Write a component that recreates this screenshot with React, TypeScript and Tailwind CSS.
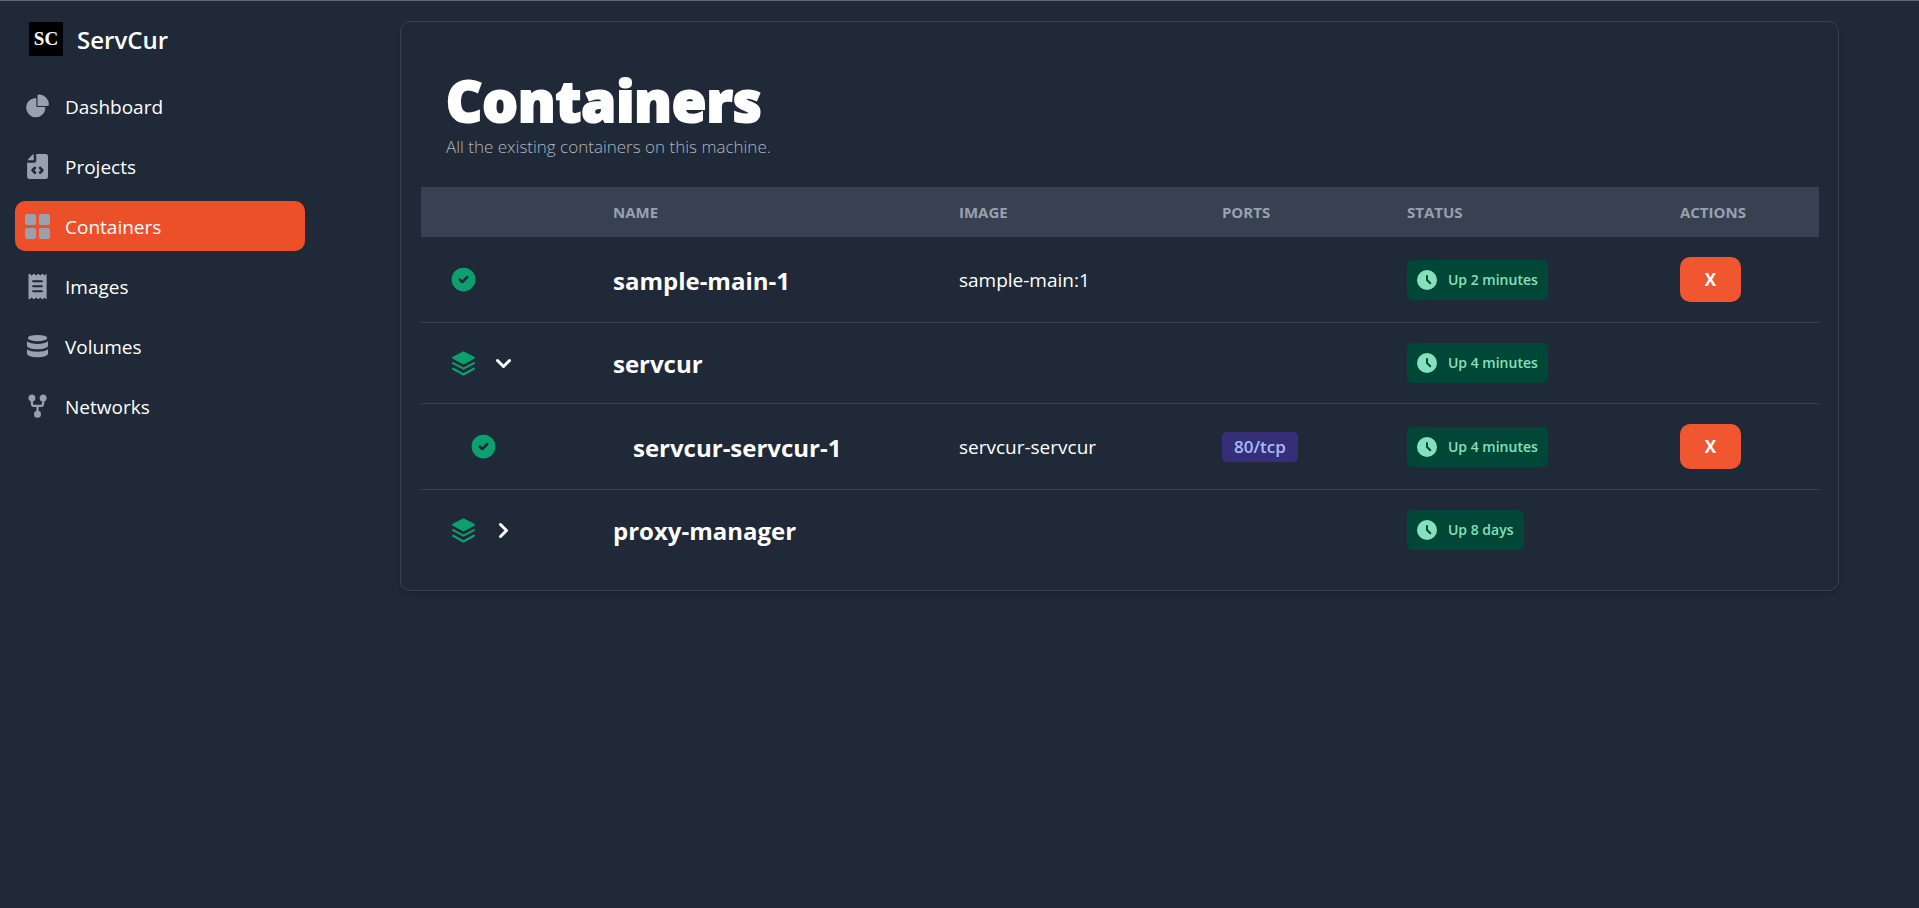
import { ReactNode } from 'react';

type IconProps = { className?: string };

const PieIcon = ({ className }: IconProps) => (
  <svg className={className} viewBox="0 0 22 21" fill="currentColor" aria-hidden="true">
    <path d="M16.975 11H10V4.025a1 1 0 0 0-1.066-.998 8.5 8.5 0 1 0 9.039 9.039.999.999 0 0 0-1-1.066h.002Z" />
    <path d="M12.5 0c-.157 0-.311.01-.565.027A1 1 0 0 0 11 1.02V10h8.975a1 1 0 0 0 1-.935c.013-.188.028-.374.028-.565A8.51 8.51 0 0 0 12.5 0Z" />
  </svg>
);

const FileCodeIcon = ({ className }: IconProps) => (
  <svg className={className} viewBox="0 0 20 20" fill="currentColor" aria-hidden="true">
    <path d="M7 .13a2.96 2.96 0 0 0-1.293.749L2.879 3.707A2.96 2.96 0 0 0 2.13 5H7V.13Z" />
    <path
      fillRule="evenodd"
      d="M16.6 0H9v5a2 2 0 0 1-2 2H1.7v11.2A1.8 1.8 0 0 0 3.5 20h13.1a1.8 1.8 0 0 0 1.8-1.8V1.8A1.8 1.8 0 0 0 16.6 0ZM8.707 14.293a1 1 0 1 1-1.414 1.414l-2-2a1 1 0 0 1 0-1.414l2-2a1 1 0 0 1 1.414 1.414L7.414 13l1.293 1.293Zm6-.586-2 2a1 1 0 0 1-1.414-1.414L12.586 13l-1.293-1.293a1 1 0 0 1 1.414-1.414l2 2a1 1 0 0 1 0 1.414Z"
    />
  </svg>
);

const GridIcon = ({ className }: IconProps) => (
  <svg className={className} viewBox="0 0 18 18" fill="currentColor" aria-hidden="true">
    <rect width="8" height="8" rx="1.6" />
    <rect x="10" width="8" height="8" rx="1.6" />
    <rect y="10" width="8" height="8" rx="1.6" />
    <rect x="10" y="10" width="8" height="8" rx="1.6" />
  </svg>
);

const ReceiptIcon = ({ className }: IconProps) => (
  <svg className={className} viewBox="0 0 20 20" fill="currentColor" aria-hidden="true">
    <path
      fillRule="evenodd"
      d="M2.8 0h1.2l1.3 1.2L6.7 0h1l1.3 1.2L10.3 0h.6l1.3 1.2L13.5 0h1l1.2 1.2L16.7 0H17.3v20h-.6l-1-1.2L14.5 20h-1l-1.3-1.2L10.9 20h-.6L9 18.8 7.7 20h-1l-1.4-1.2L4 20H2.8V0ZM6.5 5a.8.8 0 0 0 0 1.6h7a.8.8 0 0 0 0-1.6h-7Zm0 4a.8.8 0 0 0 0 1.6h7a.8.8 0 0 0 0-1.6h-7Zm0 4a.8.8 0 0 0 0 1.6h7a.8.8 0 0 0 0-1.6h-7Z"
    />
  </svg>
);

const DatabaseIcon = ({ className }: IconProps) => (
  <svg className={className} viewBox="-2 0 20 20" fill="currentColor" aria-hidden="true">
    <ellipse cx="8" cy="3.2" rx="7.8" ry="2.5" />
    <path d="M-.4 5.8C1.500 7.200 4.700 7.900 8 7.900s6.500-.7 8.400-2.100v3.600c0 1.500-3.800 2.800-8.400 2.800S-.4 10.900-.4 9.400V5.800Z" />
    <path d="M-.4 12.200c1.900 1.400 5.100 2 8.400 2s6.500-.6 8.400-2v3.600c0 1.500-3.800 2.800-8.400 2.800s-8.400-1.300-8.400-2.800v-3.600Z" />
  </svg>
);

const ForkIcon = ({ className }: IconProps) => (
  <svg className={className} viewBox="0 0 20 20" fill="none" stroke="currentColor" strokeWidth="1.8" aria-hidden="true">
    <path d="M5.500 4v3.500A2 2 0 0 0 7.500 9.500h5a2 2 0 0 0 2-2V4M10 9.500V16" />
    <circle cx="5.5" cy="3.2" r="1.9" fill="currentColor" />
    <circle cx="14.5" cy="3.2" r="1.9" fill="currentColor" />
    <circle cx="10" cy="16.2" r="1.9" fill="currentColor" />
  </svg>
);

const CheckIcon = () => (
  <svg className="size-[25px]" viewBox="0 0 20 20" fill="currentColor" aria-label="Running" role="img">
    <path d="M10 .5a9.500 9.500 0 1 0 9.500 9.500A9.510 9.510 0 0 0 10 .5Zm3.707 8.207-4 4a1 1 0 0 1-1.414 0l-2-2a1 1 0 0 1 1.414-1.414L9 10.586l3.293-3.293a1 1 0 0 1 1.414 1.414Z" />
  </svg>
);

const StackIcon = () => (
  <svg className="size-[25px]" viewBox="0 0 20 20" fill="none" stroke="currentColor" strokeWidth="1.8" strokeLinecap="round" strokeLinejoin="round" aria-label="Stack" role="img">
    <path d="m10 1.300 8.200 4.200L10 9.800 1.800 5.500 10 1.300Z" fill="currentColor" />
    <path d="m1.700 9.700 8.300 4.400 8.300-4.400M1.700 14.200l8.300 4.600 8.300-4.600" />
  </svg>
);

const ChevronIcon = ({ open }: { open: boolean }) => (
  <svg className="size-[15px]" viewBox="0 0 15 15" fill="none" stroke="currentColor" strokeWidth="3" strokeLinecap="round" strokeLinejoin="round" aria-hidden="true">
    <path d={open ? 'm1.500 4.500 6 6 6-6' : 'm4.500 1.500 6 6-6 6'} />
  </svg>
);

const ClockIcon = () => (
  <svg className="size-5" viewBox="0 0 20 20" fill="currentColor" aria-hidden="true">
    <path d="M10 0a10 10 0 1 0 10 10A10.011 10.011 0 0 0 10 0Zm3.982 13.982a1 1 0 0 1-1.414 0l-3.274-3.274A1.012 1.012 0 0 1 9 10V6a1 1 0 0 1 2 0v3.586l2.982 2.982a1 1 0 0 1 0 1.414Z" />
  </svg>
);

const navItems = [
  { label: 'Dashboard', Icon: PieIcon },
  { label: 'Projects', Icon: FileCodeIcon },
  { label: 'Containers', Icon: GridIcon, active: true },
  { label: 'Images', Icon: ReceiptIcon },
  { label: 'Volumes', Icon: DatabaseIcon },
  { label: 'Networks', Icon: ForkIcon },
];

function Sidebar() {
  return (
    <aside className="w-80 shrink-0 px-[15px] pt-[18px]">
      <a href="#" className="flex items-center gap-[14px] pl-[14px]">
        <span className="flex size-[34px] items-center justify-center bg-black font-['Liberation_Serif',serif] text-[19px] leading-6 font-bold">
          SC
        </span>
        <span className="pt-0.5 text-2xl leading-[38px] font-semibold">ServCur</span>
      </a>
      <nav className="mt-[22px]">
        <ul className="flex flex-col gap-[10px]">
          {navItems.map(({ label, Icon, active }) => (
            <li key={label}>
              <a
                href="#"
                aria-current={active ? 'page' : undefined}
                className={`flex h-[50px] items-center gap-[15px] rounded-[10px] px-[10px] text-[19px] ${active ? 'bg-[#ec5028]' : ''}`}
              >
                <Icon className="size-[25px] text-gray-400" />
                <span className="pt-0.5">{label}</span>
              </a>
            </li>
          ))}
        </ul>
      </nav>
    </aside>
  );
}

type Row = {
  name: string;
  status: string;
  image?: string;
  port?: string;
  group?: 'open' | 'closed';
  nested?: boolean;
};

const rows: Row[] = [
  { name: 'sample-main-1', image: 'sample-main:1', status: 'Up 2 minutes' },
  { name: 'servcur', status: 'Up 4 minutes', group: 'open' },
  { name: 'servcur-servcur-1', image: 'servcur-servcur', port: '80/tcp', status: 'Up 4 minutes', nested: true },
  { name: 'proxy-manager', status: 'Up 8 days', group: 'closed' },
];

const Cell = ({ children }: { children?: ReactNode }) => <td className="px-[30px] py-5">{children}</td>;

function ContainerRow({ row }: { row: Row }) {
  return (
    <tr className="border-b border-[#374151] last:border-b-0">
      <Cell>
        <div className={`flex items-center gap-[15px] text-[#0e9f6e] ${row.nested ? 'pl-5' : ''}`}>
          {row.group ? <StackIcon /> : <CheckIcon />}
          {row.group && (
            <button type="button" aria-label={`Toggle ${row.name}`} aria-expanded={row.group === 'open'} className="p-[5px] text-white">
              <ChevronIcon open={row.group === 'open'} />
            </button>
          )}
        </div>
      </Cell>
      <th scope="row" className="px-[30px] pt-0.5 text-left">
        <span className={`block text-2xl font-bold whitespace-nowrap ${row.nested ? 'pl-5' : ''}`}>{row.name}</span>
      </th>
      <td className="px-[30px] pt-0.5">{row.image}</td>
      <Cell>
        {row.port && (
          <span className="flex h-[30px] w-fit items-center rounded-[5px] bg-[#362f78] px-3 text-[17px] font-semibold text-[#a4bcfb]">
            {row.port}
          </span>
        )}
      </Cell>
      <Cell>
        <span className="flex h-10 w-fit items-center gap-[11px] rounded-[5px] bg-[#014737] px-[10px] text-sm font-semibold whitespace-nowrap text-[#84e1bc]">
          <ClockIcon />
          {row.status}
        </span>
      </Cell>
      <Cell>
        {!row.group && (
          <button type="button" aria-label={`Remove ${row.name}`} className="block h-[45px] w-[61px] rounded-[10px] bg-[#f05730] text-[17px] font-bold">
            X
          </button>
        )}
      </Cell>
    </tr>
  );
}

export default function App() {
  return (
    <div className="flex min-h-screen border-t border-[#666] bg-[#1f2937] font-['Open_Sans','Noto_Sans',sans-serif] text-white">
      <Sidebar />
      <main className="min-w-0 flex-1 pt-5">
        <section className="mx-auto w-[90%] rounded-[10px] border border-[#374151] p-5 shadow-md">
          <header className="h-[145px] px-[25px] pt-7">
            <h1 className="mb-0.5 text-[56px] leading-[60px] font-extrabold [-webkit-text-stroke:2px_white]">Containers</h1>
            <p className="text-[17px] leading-[30px] font-light text-[#b0b6c1]">All the existing containers on this machine.</p>
          </header>
          <table className="w-full table-fixed text-left text-[19px]">
            <colgroup>
              <col className="w-[162px]" />
              <col className="w-[346px]" />
              <col className="w-[263px]" />
              <col className="w-[185px]" />
              <col className="w-[273px]" />
              <col className="w-[169px]" />
            </colgroup>
            <thead className="bg-[#374151] text-[15px] text-gray-400 uppercase">
              <tr className="h-[50px]">
                <th aria-label="State" />
                {['Name', 'Image', 'Ports', 'Status', 'Actions'].map((label) => (
                  <th key={label} scope="col" className="px-[30px] font-bold">
                    {label}
                  </th>
                ))}
              </tr>
            </thead>
            <tbody>
              {rows.map((row) => (
                <ContainerRow key={row.name} row={row} />
              ))}
            </tbody>
          </table>
        </section>
      </main>
    </div>
  );
}
